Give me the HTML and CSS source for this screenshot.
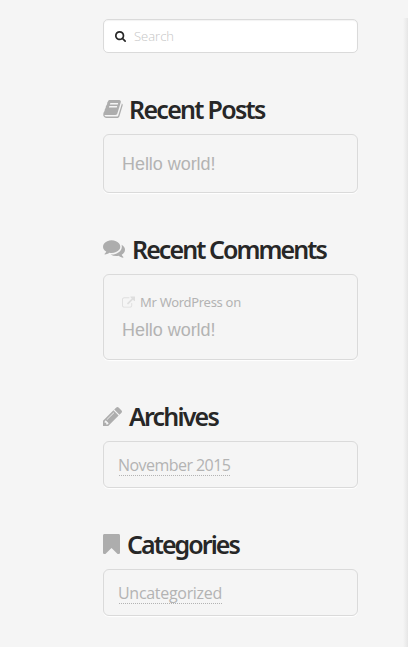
FILE: index.html
```html
<!DOCTYPE html>
<html lang="en">
<head>
    <meta charset="UTF-8">
    <meta name="viewport" content="width=device-width, initial-scale=1.0">
    <title>Sidebar</title>
    <link rel="stylesheet" href="styles.css">
</head>
<body>
    <aside class="sidebar">
        <form class="search-form">
            <svg class="search-icon" viewBox="64 128 1664 1664"><path d="M1216 832q0-185-131.5-316.5t-316.5-131.5-316.5 131.5-131.5 316.5 131.5 316.5 316.5 131.5 316.5-131.5 131.5-316.5zm512 832q0 52-38 90t-90 38q-54 0-90-38l-343-342q-179 124-399 124-143 0-273.5-55.5t-225-150-150-225-55.5-273.5 55.5-273.5 150-225 225-150 273.5-55.5 273.5 55.5 225 150 150 225 55.5 273.5q0 220-124 399l343 343q37 37 37 90z"/></svg>
            <input type="text" class="search-input" placeholder="Search">
        </form>

        <section class="widget">
            <h4 class="widget-title posts-title">
                <svg class="icon-book" viewBox="64 128 1668 1536"><path d="M1703 478q40 57 18 129l-275 906q-19 64-76.500 107.500t-122.500 43.500h-923q-77 0-148.500-53.500t-99.500-131.500q-24-67-2-127 0-4 3-27t4-37q1-8-3-21.500t-3-19.500q2-11 8-21t16.500-23.500 16.500-23.500q23-38 45-91.500t30-91.500q3-10 .5-30t-.5-28q3-11 17-28t17-23q21-36 42-92t25-90q1-9-2.500-32t.5-28q4-13 22-30.500t22-22.500q19-26 42.500-84.500t27.500-96.500q1-8-3-25.500t-2-26.500q2-8 9-18t18-23 17-21q8-12 16.500-30.500t15-35 16-36 19.500-32 26.500-23.500 36-11.500 47.500 5.500l-1 3q38-9 51-9h761q74 0 114 56t18 130l-274 906q-36 119-71.500 153.500t-128.500 34.500h-869q-27 0-38 15-11 16-1 43 24 70 144 70h923q29 0 56-15.500t35-41.500l300-987q7-22 5-57 38 15 59 43zm-1064 2q-4 13 2 22.500t20 9.500h608q13 0 25.500-9.500t16.500-22.500l21-64q4-13-2-22.500t-20-9.500h-608q-13 0-25.500 9.500t-16.500 22.500zm-83 256q-4 13 2 22.500t20 9.500h608q13 0 25.500-9.500t16.500-22.500l21-64q4-13-2-22.500t-20-9.500h-608q-13 0-25.500 9.500t-16.500 22.500z"/></svg>
                <span>Recent Posts</span>
            </h4>
            <div class="widget-box">
                <a href="#" class="post-link">Hello world!</a>
            </div>
        </section>

        <section class="widget">
            <h4 class="widget-title comments-title">
                <svg class="icon-comments" viewBox="0 256 1792 1408"><path d="M1408 768q0 139-94 257t-256.500 186.500-353.500 68.500q-86 0-176-16-124 88-278 128-36 9-86 16h-3q-11 0-20.500-8t-11.500-21q-1-3-1-6.500t.5-6.500 2-6l2.500-5 3.500-5.500 4-5 4.500-5 4-4.500q5-6 23-25t26-29.500 22.500-29 25-38.500 20.500-44q-124-72-195-177t-71-224q0-139 94-257t256.500-186.500 353.500-68.500 353.500 68.500 256.500 186.500 94 257zm384 256q0 120-71 224.500t-195 176.500q10 24 20.500 44t25 38.500 22.500 29 26 29.500 23 25q1 1 4 4.500t4.500 5 4 5 3.500 5.500l2.500 5 2 6 .5 6.500-1 6.500q-3 14-13 22t-22 7q-50-7-86-16-154-40-278-128-90 16-176 16-271 0-472-132 58 4 88 4 161 0 309-45t264-129q125-92 192-212t67-254q0-77-23-152 129 71 204 178t75 230z"/></svg>
                <span>Recent Comments</span>
            </h4>
            <div class="widget-box comments-box">
                <p class="comment-author">
                    <svg class="icon-link" viewBox="0 0 1792 1536"><path d="M1408 928v320q0 119-84.500 203.500t-203.500 84.500h-832q-119 0-203.500-84.500t-84.500-203.500v-832q0-119 84.500-203.500t203.500-84.500h704q14 0 23 9t9 23v64q0 14-9 23t-23 9h-704q-66 0-113 47t-47 113v832q0 66 47 113t113 47h832q66 0 113-47t47-113v-320q0-14 9-23t23-9h64q14 0 23 9t9 23zm384-864v512q0 26-19 45t-45 19-45-19l-176-176-652 652q-10 10-23 10t-23-10l-114-114q-10-10-10-23t10-23l652-652-176-176q-19-19-19-45t19-45 45-19h512q26 0 45 19t19 45z"/></svg>
                    <span>Mr WordPress on</span>
                </p>
                <a href="#" class="post-link">Hello world!</a>
            </div>
        </section>

        <section class="widget">
            <h4 class="widget-title archives-title">
                <svg class="icon-pencil" viewBox="128 149 1515 1515"><path d="M491 1536l91-91-235-235-91 91v107h128v128h107zm523-928q0-22-22-22-10 0-17 7l-542 542q-7 7-7 17 0 22 22 22 10 0 17-7l542-542q7-7 7-17zm-54-192l416 416-832 832h-416v-416zm683 96q0 53-37 90l-166 166-416-416 166-165q36-38 90-38 53 0 91 38l235 234q37 39 37 91z"/></svg>
                <span>Archives</span>
            </h4>
            <div class="widget-box list-box">
                <a href="#" class="list-link archive-link">November 2015</a>
            </div>
        </section>

        <section class="widget">
            <h4 class="widget-title categories-title">
                <svg class="icon-bookmark" viewBox="256 128 1280 1504" preserveAspectRatio="none"><path d="M1420 128q23 0 44 9 33 13 52.500 41t19.500 62v1289q0 34-19.500 62t-52.500 41q-19 8-44 8-48 0-83-32l-441-424-441 424q-36 33-83 33-23 0-44-9-33-13-52.500-41t-19.500-62v-1289q0-34 19.500-62t52.500-41q21-9 44-9h1048z"/></svg>
                <span>Categories</span>
            </h4>
            <div class="widget-box list-box">
                <a href="#" class="list-link category-link">Uncategorized</a>
            </div>
        </section>
    </aside>
    <div class="page-edge"></div>
</body>
</html>
```
FILE: styles.css
```css
* {
    box-sizing: border-box;
}

body {
    display: flex;
    justify-content: space-between;
    height: 647px;
    margin: 0;
    overflow: hidden;
    background-color: #f5f5f5;
    font-family: "Noto Sans", "Open Sans", sans-serif;
}

.sidebar {
    width: 255px;
    margin-left: 103px;
    padding-top: 19px;
}

/* Search */
.search-form {
    display: flex;
    align-items: center;
    height: 34px;
    padding-left: 11px;
    background-color: #fff;
    border: 1px solid #dadada;
    border-radius: 5px;
    box-shadow: inset 0 1px 1px rgba(0, 0, 0, 0.05);
}

.search-icon {
    width: 11px;
    height: 11px;
    fill: #272727;
}

.search-input {
    width: 200px;
    margin-left: 8px;
    padding: 0;
    border: none;
    outline: none;
    background: none;
    font-family: "Open Sans", sans-serif;
    font-weight: 300;
    font-size: 13px;
    letter-spacing: 0;
}

.search-input::placeholder {
    color: #c5c5c5;
}

/* Widgets */
.widget-title {
    display: flex;
    align-items: center;
    height: 30px;
    margin: 41px 0 10px;
    color: #272727;
    font-size: 25px;
    font-weight: 600;
    line-height: 30px;
    white-space: nowrap;
}

.posts-title {
    letter-spacing: -1.7px;
}

.comments-title {
    letter-spacing: -1.93px;
}

.archives-title {
    letter-spacing: -1.8px;
}

.categories-title {
    letter-spacing: -1.95px;
}

.widget-title svg {
    flex: none;
    fill: #adadad;
}

.icon-book {
    width: 20px;
    height: 18px;
    margin-right: 6px;
}

.icon-comments {
    width: 22px;
    height: 18px;
    margin-right: 7px;
}

.icon-pencil {
    width: 19px;
    height: 19px;
    margin-right: 7px;
}

.icon-bookmark {
    width: 17px;
    height: 20px;
    margin-right: 7px;
}

.widget-box {
    height: 59px;
    padding: 18px;
    border: 1px solid #dadada;
    border-radius: 6px;
    box-shadow: 0 1px 1px rgba(255, 255, 255, 0.95);
}

.post-link {
    display: block;
    color: #b3b3b3;
    font-family: "Liberation Sans", Arial, sans-serif;
    font-size: 18px;
    line-height: 22px;
    letter-spacing: -0.05px;
    text-decoration: none;
}

.comments-box {
    height: 86px;
    padding-top: 17px;
}

.comment-author {
    display: flex;
    align-items: center;
    height: 20px;
    margin: 0 0 7px;
    color: #b3b3b3;
    font-size: 13px;
    letter-spacing: -0.3px;
}

.icon-link {
    width: 13px;
    height: 12px;
    margin-right: 5px;
    fill: #dedede;
}

.list-box {
    height: 47px;
    padding: 12px 15px;
}

.list-link {
    display: inline-block;
    height: 22px;
    border-bottom: 1px dotted #b3b3b3;
    color: #b3b3b3;
    font-family: "Open Sans", sans-serif;
    font-size: 16px;
    line-height: 22px;
    letter-spacing: -0.3px;
    text-decoration: none;
    text-indent: -1px;
}

.archive-link {
    letter-spacing: -0.55px;
}

/* Shadow of the content area */
.page-edge {
    width: 5px;
    margin-top: 18px;
    background: linear-gradient(to right, #f5f5f5, #e6e6e6);
}
```
